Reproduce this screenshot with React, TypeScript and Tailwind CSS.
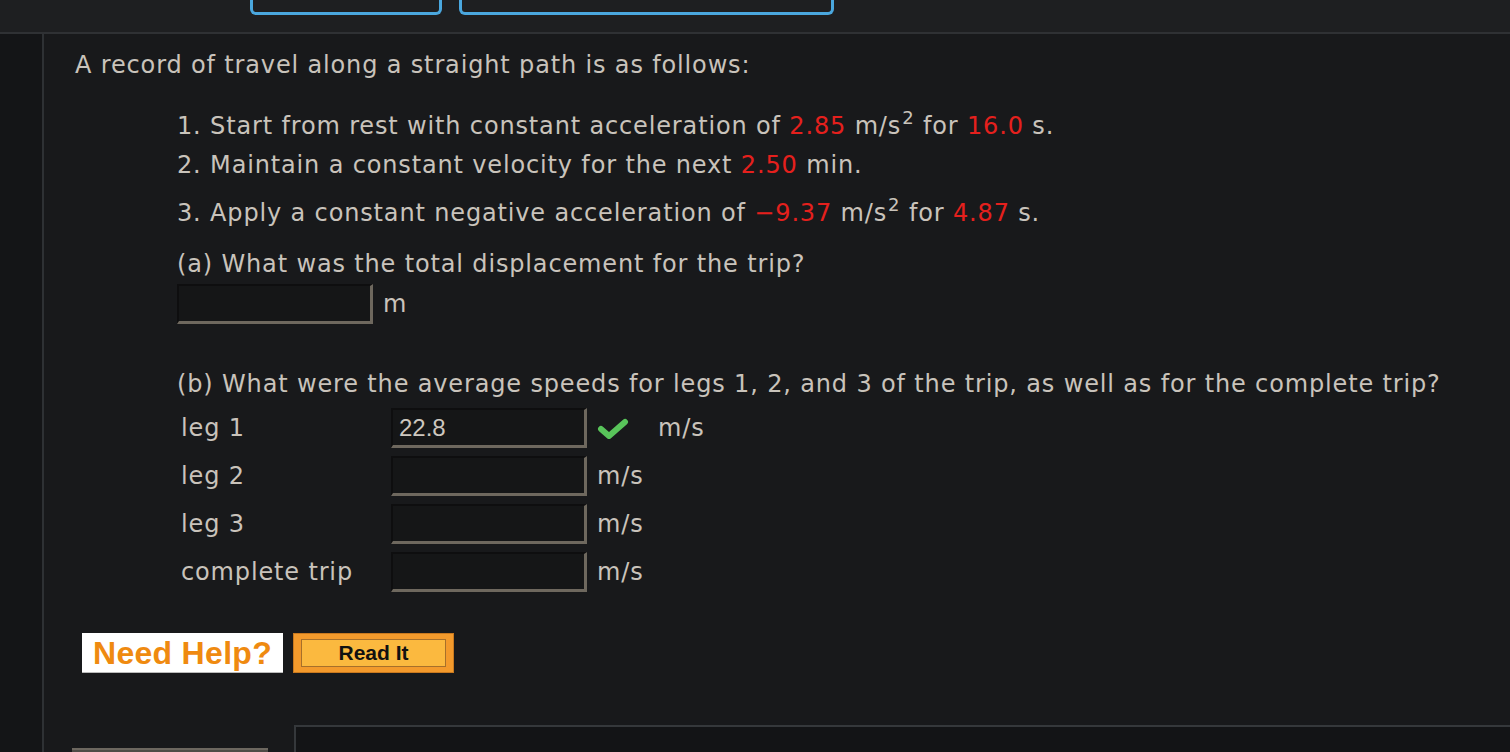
import React from "react";

const Red = ({ children }: { children: React.ReactNode }) => (
  <span className="text-[#e5201d]">{children}</span>
);

const Unit = () => (
  <span>
    m/s<sup className="text-[0.75em] relative -top-[0.55em] ml-[1px]">2</sup>
  </span>
);

const AnswerBox = ({ value }: { value?: string }) => (
  <div className="w-[196px] h-[40px] bg-[#151617] border-t-2 border-l-2 border-t-[#0e0e0f] border-l-[#0e0e0f] border-b-[3px] border-r-[3px] border-b-[#6e685e] border-r-[#6e685e] flex items-center px-[6px]">
    <span className="text-[24px] tracking-normal text-[#cdc7bf] font-['Liberation_Sans',Arial,sans-serif]">
      {value || ""}
    </span>
  </div>
);

const legs = [
  { id: 1, label: "leg 1", value: "22.8", correct: true },
  { id: 2, label: "leg 2", value: "", correct: false },
  { id: 3, label: "leg 3", value: "", correct: false },
  { id: 4, label: "complete trip", value: "", correct: false },
];

const Check = () => (
  <svg width="32" height="22" viewBox="0 0 32 22" className="mx-[10px]">
    <path
      d="M4 12 L12 19 L28 5"
      fill="none"
      stroke="#58c45a"
      strokeWidth="6"
      strokeLinecap="round"
      strokeLinejoin="round"
    />
  </svg>
);

export default function App() {
  return (
    <div className="w-[1510px] h-[752px] overflow-hidden bg-[#18191b] font-['DejaVu_Sans',Verdana,sans-serif]">
      {/* top bar */}
      <div className="h-[32px] bg-[#1e1f21] flex gap-[17px] pl-[250px]">
        <div className="w-[192px] h-[15px] border-[3px] border-t-0 border-[#4aa7de] rounded-b-[6px]" />
        <div className="w-[375px] h-[15px] border-[3px] border-t-0 border-[#4aa7de] rounded-b-[6px]" />
      </div>
      <div className="h-[2px] bg-[#2f3134]" />

      <div className="flex h-[718px]">
        <div className="w-[44px] bg-[#141517] border-r-2 border-[#2e3134]" />

        <div className="flex-1 flex flex-col text-[24px] tracking-[0.85px] text-[#c9c3bb] pl-[31px]">
          <p className="mt-[16px] h-[30px] leading-[30px]">
            A record of travel along a straight path is as follows:
          </p>

          <div className="pl-[102px] flex flex-col">
            <p className="mt-[31px] h-[30px] leading-[30px]">
              1. Start from rest with constant acceleration of <Red>2.85</Red> <Unit /> for{" "}
              <Red>16.0</Red> s.
            </p>
            <p className="mt-[9px] h-[30px] leading-[30px]">
              2. Maintain a constant velocity for the next <Red>2.50</Red> min.
            </p>
            <p className="mt-[18px] h-[30px] leading-[30px]">
              3. Apply a constant negative acceleration of <Red>−9.37</Red> <Unit /> for{" "}
              <Red>4.87</Red> s.
            </p>
            <p className="mt-[21px] h-[30px] leading-[30px]">
              (a) What was the total displacement for the trip?
            </p>
            <div className="mt-[5px] flex items-center gap-[10px]">
              <AnswerBox />
              <span>m</span>
            </div>

            <p className="mt-[45px] h-[30px] leading-[30px]">
              (b) What were the average speeds for legs 1, 2, and 3 of the trip, as well as for the
              complete trip?
            </p>
            <div className="mt-[9px] flex flex-col gap-[8px] pl-[4px]">
              {legs.map((leg) => (
                <div key={leg.id} className="flex items-center h-[40px]">
                  <span className="w-[210px]">{leg.label}</span>
                  <AnswerBox value={leg.value} />
                  {leg.correct ? (
                    <>
                      <Check />
                      <span className="ml-[19px]">m/s</span>
                    </>
                  ) : (
                    <span className="ml-[10px]">m/s</span>
                  )}
                </div>
              ))}
            </div>
          </div>

          {/* help */}
          <div className="mt-[41px] ml-[7px] flex gap-[10px] tracking-normal">
            <div className="w-[201px] h-[40px] bg-white border-b border-[#bbbbbb] flex items-center justify-center">
              <span className="text-[#ef8a10] font-bold text-[32px] tracking-[0.3px] font-['Liberation_Sans',Arial,sans-serif]">
                Need Help?
              </span>
            </div>
            <button
              type="button"
              className="w-[161px] h-[40px] bg-[#f39a2c] border border-[#c9791f] px-[7px] py-[5px] flex"
            >
              <span className="flex-1 bg-[#fbb93f] border border-[#a7702a] flex items-center justify-center text-[#111] font-bold text-[21px] font-['Liberation_Sans',Arial,sans-serif]">
                Read It
              </span>
            </button>
          </div>

          {/* bottom fragments */}
          <div className="mt-[52px] flex flex-1 items-start">
            <div className="w-[196px] h-[30px] mt-[23px] -ml-[3px] bg-[#4f4c47] border-t-2 border-[#6c675f]" />
            <div className="ml-[26px] flex-1 h-[40px] bg-[#131416] border-t-2 border-l-2 border-[#35383b]" />
          </div>
        </div>
      </div>
    </div>
  );
}
